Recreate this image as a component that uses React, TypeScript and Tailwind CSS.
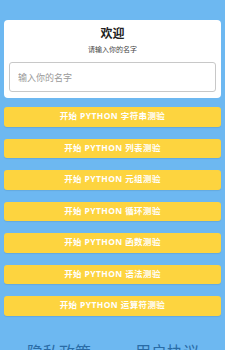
const quizzes = ["字符串", "列表", "元组", "循环", "函数", "语法", "运算符"];

export default function App() {
  return (
    <div
      className="h-[350px] bg-[#6db8f1] px-[4px] pt-[20px] overflow-hidden"
      style={{ fontFamily: '"Noto Sans", "Noto Sans CJK SC", sans-serif' }}
    >
      <div className="bg-white rounded-[4px] px-[5px] pt-[6px] pb-[6px]">
        <h1 className="text-center text-[12px] leading-[16px] font-bold text-[#222]">欢迎</h1>
        <p className="text-center text-[7px] leading-[10px] mt-[3px] text-[#444]">请输入你的名字</p>
        <input
          placeholder="输入你的名字"
          className="mt-[7px] block w-full h-[30px] rounded-[3px] border border-[#c8c8c8] px-[8px] text-[9px] outline-none placeholder:text-[#9a9a9a]"
        />
      </div>

      <div className="mt-[9px] flex flex-col gap-[12px]">
        {quizzes.map((q) => (
          <button
            key={q}
            className="h-[19.5px] w-full rounded-[3px] bg-[#fdd43f] text-white text-[8.5px] font-bold tracking-[0.4px] shadow-[0_1px_1px_rgba(0,0,0,0.08)]"
          >
            开始 PYTHON {q}测验
          </button>
        ))}
      </div>

      <div className="mt-[25px] flex text-[16px] leading-[22px] text-[#2a6ca6]">
        <span className="ml-[23px]">隐私政策</span>
        <span className="ml-[44px]">用户协议</span>
      </div>
    </div>
  );
}
